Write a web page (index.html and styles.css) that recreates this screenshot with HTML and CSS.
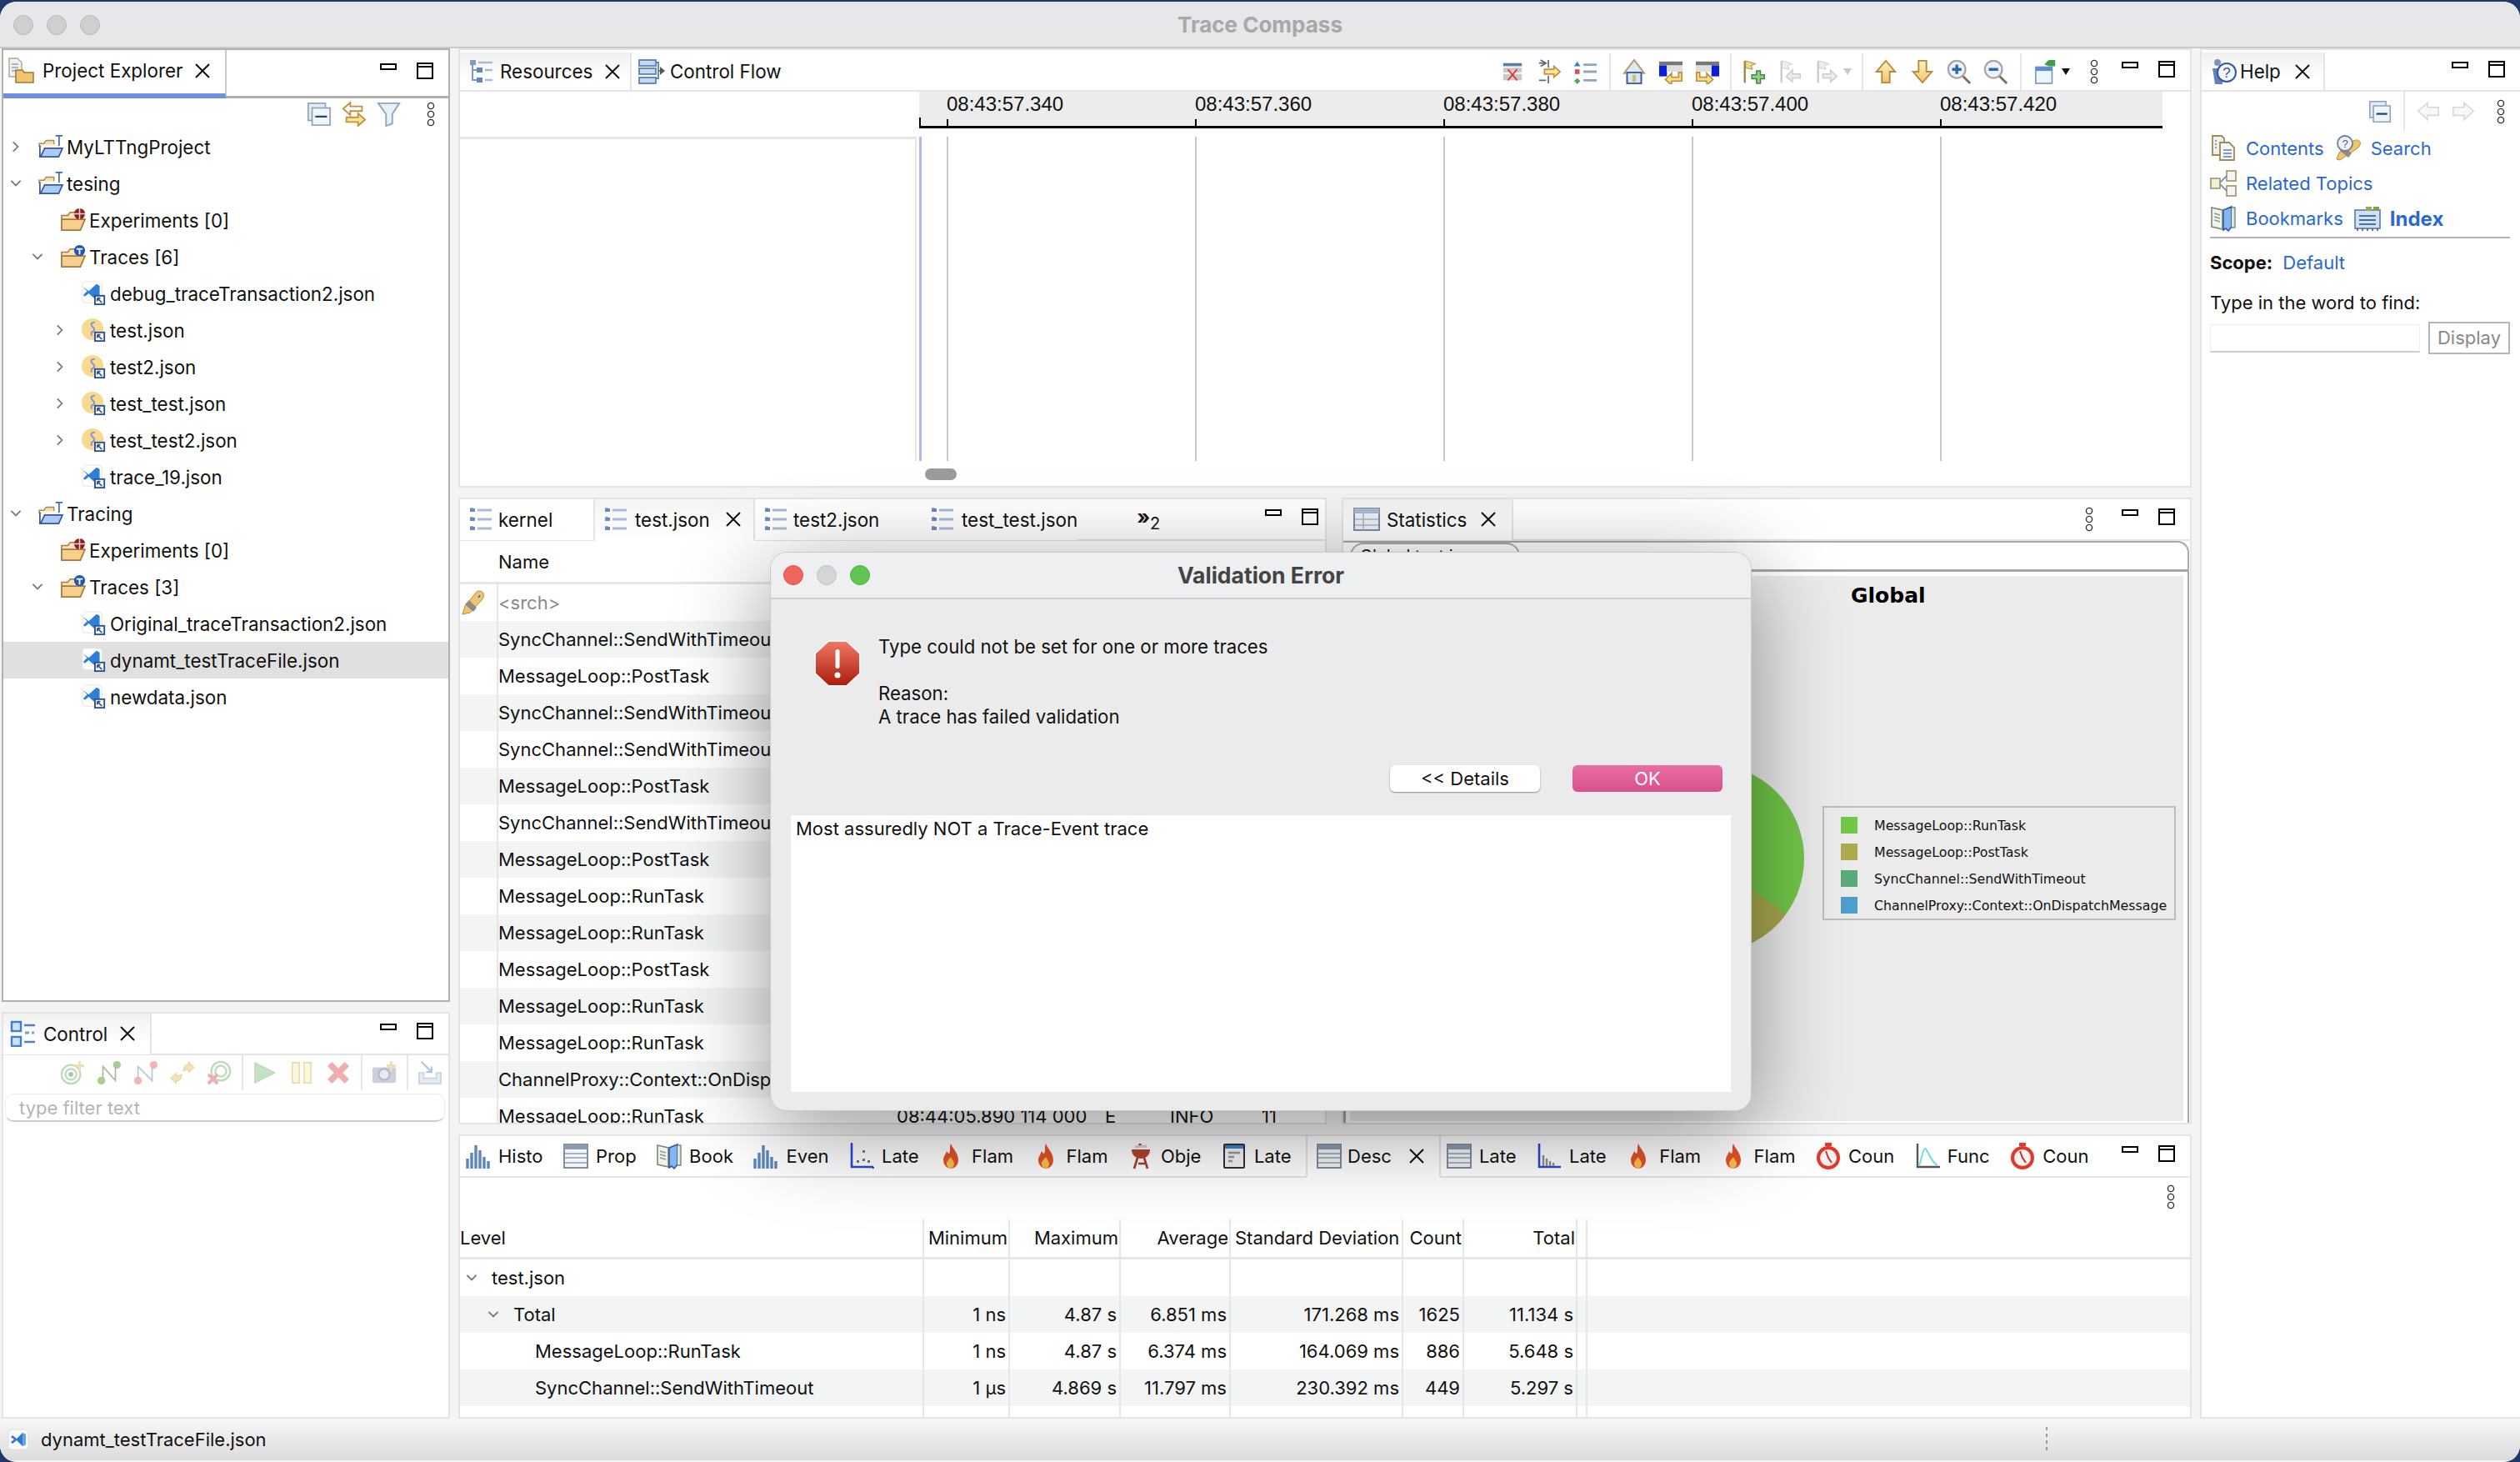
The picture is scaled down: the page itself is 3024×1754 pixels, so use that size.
FILE: index.html
```html
<!DOCTYPE html>
<html>
<head>
    <title>Trace Compass</title>
    <link rel="stylesheet" href="styles.css">
</head>
<body>
<svg class="sprite" xmlns="http://www.w3.org/2000/svg">
    <defs>
        <linearGradient id="g-err" x1="0" y1="0" x2="0" y2="1"><stop offset="0" stop-color="#ee7a62"/><stop offset="1" stop-color="#ab1a0e"/></linearGradient>
        <linearGradient id="g-arrow" x1="0" y1="0" x2="0" y2="1"><stop offset="0" stop-color="#fff3c4"/><stop offset="1" stop-color="#f2c469"/></linearGradient>
        <symbol id="i-min" viewBox="0 0 20 10"><rect x="1" y="1" width="18" height="6" fill="#fff" stroke="#000" stroke-width="2"/></symbol>
        <symbol id="i-max" viewBox="0 0 20 20"><rect x="1" y="1" width="18" height="18" fill="#fff" stroke="#000" stroke-width="2"/><path d="M1 5h18" stroke="#000" stroke-width="2"/></symbol>
        <symbol id="i-x" viewBox="0 0 20 20"><path d="M2 2l16 16M18 2L2 18" stroke="#111" stroke-width="2" fill="none"/></symbol>
        <symbol id="i-dots" viewBox="0 0 10 30"><g fill="none" stroke="#333" stroke-width="1.4"><circle cx="5" cy="5" r="3.6"/><circle cx="5" cy="15" r="3.6"/><circle cx="5" cy="25" r="3.6"/></g></symbol>
        <symbol id="i-right" viewBox="0 0 16 20"><path d="M4 3l7 7-7 7" fill="none" stroke="#777" stroke-width="2.2"/></symbol>
        <symbol id="i-down" viewBox="0 0 20 16"><path d="M3 4l7 7 7-7" fill="none" stroke="#777" stroke-width="2.2"/></symbol>
        <symbol id="i-explorer" viewBox="0 0 32 32"><path d="M1 1h10l5 5v17H1z" fill="#edf1f7" stroke="#b7a67a" stroke-width="1.4"/><path d="M4 8h8M4 12h8M4 16h8" stroke="#87a3d2" stroke-width="1.6"/><path d="M9 15h8l2 3h11v12H9z" fill="#efc66f" stroke="#a37a34" stroke-width="1.6"/></symbol>
        <symbol id="i-project" viewBox="0 0 32 32"><path d="M1 12h6l3-4h10v7H1z" fill="#f3dfb5" stroke="#a58a58" stroke-width="1.4"/><path d="M2 13h20v4H2z" fill="#fff6dd"/><path d="M2 14v15h24l5-11H8l-5 11" fill="#a9ccf5" stroke="#3655ad" stroke-width="1.8"/><path d="M22 2h9M26.500 2v13" stroke="#3e6aae" stroke-width="1.8"/></symbol>
        <symbol id="i-exp" viewBox="0 0 32 32"><path d="M1 10h8l3-4h8v5h5v5H1z" fill="#f8e4b8" stroke="#a6763a" stroke-width="1.6"/><path d="M1 29V15h30l-6 14z" fill="#f4d08c" stroke="#a6763a" stroke-width="1.8"/><circle cx="24" cy="8" r="7" fill="#8c1d1d"/><path d="M17 8h14M24 1v14" stroke="#f3dada" stroke-width="1.6"/></symbol>
        <symbol id="i-traces" viewBox="0 0 32 32"><path d="M1 10h8l3-4h8v5h5v5H1z" fill="#f8e4b8" stroke="#a6763a" stroke-width="1.6"/><path d="M1 29V15h30l-6 14z" fill="#f4d08c" stroke="#a6763a" stroke-width="1.8"/><circle cx="24" cy="8" r="7" fill="#1f55b8"/><path d="M20 6h8M24 6v7" stroke="#fff" stroke-width="2"/></symbol>
        <symbol id="i-vsfile" viewBox="0 0 32 32"><rect x="1" y="1" width="25" height="27" rx="4" fill="#fff" stroke="#e3e3e3"/><path d="M4 9l5 4 10-9 4 2v17l-4 2-10-9-5 4-2-2 5-5-5-5z" fill="#2f7fd6"/><rect x="16" y="18" width="14" height="13" fill="#2c4f8d"/><rect x="18" y="20" width="10" height="9" fill="#fff"/><path d="M20 22l6 6M20 22h4M20 22v4" stroke="#2c4f8d" stroke-width="1.8"/></symbol>
        <symbol id="i-trace" viewBox="0 0 32 32"><circle cx="14" cy="15" r="14" fill="#f8d98e"/><path d="M17 6c-5 0-6 3-3 6 3 2 3 5 0 6-2 1-2 3-1 5" fill="none" stroke="#7d92dc" stroke-width="2"/><rect x="16" y="18" width="14" height="13" fill="#2c4f8d"/><rect x="18" y="20" width="10" height="9" fill="#fff"/><path d="M20 22l6 6M20 22h4M20 22v4" stroke="#2c4f8d" stroke-width="1.8"/></symbol>
        <symbol id="i-collapse" viewBox="0 0 32 32"><rect x="2" y="2" width="22" height="22" fill="#e4ebf4" stroke="#8ea4bd" stroke-width="1.8"/><rect x="7" y="8" width="23" height="22" fill="#f0f5fa" stroke="#8ea4bd" stroke-width="1.8"/><path d="M11 19h15" stroke="#23466f" stroke-width="2.4"/></symbol>
        <symbol id="i-link" viewBox="0 0 32 32"><path d="M2 9l9-8v5h15v6H11v5z" fill="#fff" stroke="#c1913e" stroke-width="2"/><path d="M30 23l-9-8v5H6v6h15v5z" fill="#fbe29a" stroke="#c1913e" stroke-width="2"/></symbol>
        <symbol id="i-filter" viewBox="0 0 32 32"><path d="M2 2h27L20 16v12l-8 3V16z" fill="#e9f0f8" stroke="#8ea6c4" stroke-width="2"/></symbol>
        <symbol id="i-control" viewBox="0 0 32 32"><g fill="#cfe0f5" stroke="#3f7fd0" stroke-width="2.400"><rect x="2" y="2" width="11" height="11"/><rect x="2" y="20" width="11" height="11"/></g><path d="M17 6h13M17 26h13" stroke="#5a7fae" stroke-width="2.400"/><path d="M18 15h5M26 15h3" stroke="#7d9bc0" stroke-width="3"/></symbol>
        <symbol id="i-tree" viewBox="0 0 32 32"><path d="M5 4v23M5 14h6M5 26h6" stroke="#7e9bc5" stroke-width="2"/><rect x="2" y="2" width="7" height="6" fill="#7e9bc5"/><rect x="10" y="11" width="7" height="6" fill="#5f86bd"/><rect x="10" y="23" width="7" height="6" fill="#5f86bd"/><path d="M12 5h17M20 14h9M20 26h9" stroke="#a9bad3" stroke-width="2.4"/></symbol>
        <symbol id="i-flow" viewBox="0 0 32 32"><g fill="#c6d9ef" stroke="#5b82b8" stroke-width="1.8"><rect x="1" y="2" width="20" height="7"/><rect x="1" y="12" width="20" height="7"/><rect x="1" y="23" width="20" height="7"/></g><path d="M21 5h3v19h-3M24 15h3" fill="none" stroke="#5b82b8" stroke-width="1.8"/><path d="M26 10l6 5-6 5z" fill="#555"/></symbol>
        <symbol id="i-list" viewBox="0 0 32 32"><path d="M4 2v28" stroke="#8aa3c7" stroke-width="3" stroke-dasharray="5 6"/><path d="M2 5h6M2 16h6M2 27h6" stroke="#6d8cbc" stroke-width="4"/><path d="M11 5h17M11 16h17M11 27h17" stroke="#a8bad4" stroke-width="3"/></symbol>
        <symbol id="i-table" viewBox="0 0 32 32"><rect x="2" y="2" width="28" height="28" fill="#f3f5f8" stroke="#7f8ea3" stroke-width="2"/><rect x="2" y="2" width="28" height="6" fill="#8d9cb2"/><path d="M3 13h26M3 18h26M3 24h26" stroke="#a9b4c4" stroke-width="2"/></symbol>
        <symbol id="i-help" viewBox="0 0 32 32"><circle cx="9" cy="5" r="4" fill="#7b95b9"/><path d="M3 12h12v19H6z" fill="#5f83b3"/><circle cx="20" cy="17" r="11" fill="#f2f5fa" stroke="#34589b" stroke-width="2"/><text x="20" y="23" font-size="17" font-family="Liberation Sans" text-anchor="middle" fill="#34589b">?</text></symbol>
        <symbol id="i-stats" viewBox="0 0 32 32"><rect x="1" y="3" width="30" height="26" fill="#eef2f8" stroke="#7f8ea3" stroke-width="2"/><rect x="1" y="3" width="30" height="6" fill="#a9bad3"/><path d="M12 9v20M2 16h28M2 23h28" stroke="#a9b4c4" stroke-width="1.6"/></symbol>
        <symbol id="i-bars" viewBox="0 0 32 32"><path d="M3 31V19M8 31V12M13 31V3M18 31V9M23 31V17M28 31V22" stroke="#5c86c2" stroke-width="3.400"/></symbol>
        <symbol id="i-book" viewBox="0 0 32 32"><path d="M2 3l13 3v23L2 26z" fill="#f0f3e7" stroke="#7d8872" stroke-width="1.6"/><path d="M5 10l7 2M5 14l7 2M5 18l7 2" stroke="#8a97a5" stroke-width="1.400"/><path d="M16 6l10-4v24l-4 5-3-3-3 2z" fill="#86b6ec" stroke="#2d5a9d" stroke-width="1.6"/><path d="M26 3h4v24h-4" fill="#dce6d9" stroke="#7d8872" stroke-width="1.4"/></symbol>
        <symbol id="i-scatter" viewBox="0 0 32 32"><path d="M4 1v28h26" fill="none" stroke="#2c49d6" stroke-width="2.600"/><path d="M3 1l1-1 1 1M29 29l2 1-2 1" stroke="#2c49d6"/><g fill="#777"><rect x="10" y="21" width="3" height="3"/><rect x="17" y="9" width="3" height="3"/><rect x="17" y="19" width="3" height="3"/><rect x="23" y="21" width="3" height="3"/></g></symbol>
        <symbol id="i-flame" viewBox="0 0 32 32"><path d="M15 1c2 6 9 11 9 20a9 10 0 0 1-18 0c0-5 3-7 4-11 1 2 2 3 3 3 2-4 0-8 2-12z" fill="#e5532a"/><path d="M15 17c1 3 4 5 4 8a4 5 0 0 1-9 0c0-3 3-5 5-8z" fill="#fbc34a"/></symbol>
        <symbol id="i-bbq" viewBox="0 0 32 32"><path d="M15 1v4" stroke="#a53f2a" stroke-width="3"/><path d="M5 8h22c0 7-5 11-11 11S5 15 5 8z" fill="#b4452e"/><path d="M9 5l14-1" stroke="#d8cfc8" stroke-width="3"/><path d="M12 18L8 31M20 18l4 13M13 25h8" stroke="#a53f2a" stroke-width="2.600"/></symbol>
        <symbol id="i-doc" viewBox="0 0 32 32"><rect x="4" y="2" width="24" height="28" rx="1" fill="#f6f6f6" stroke="#333" stroke-width="2"/><rect x="5" y="3" width="22" height="4" fill="#3d86d8"/><path d="M9 12h14M9 17h7M9 22h5" stroke="#9a9a9a" stroke-width="2.400"/></symbol>
        <symbol id="i-latebars" viewBox="0 0 32 32"><path d="M4 1v28h26" fill="none" stroke="#2c49d6" stroke-width="2.600"/><path d="M9 28V15M13 28V19M17 28V22M21 28V24" stroke="#8d8d8d" stroke-width="2.400"/></symbol>
        <symbol id="i-watch" viewBox="0 0 32 32"><rect x="12" y="0" width="8" height="4" fill="#e5362a"/><circle cx="16" cy="18" r="14" fill="#e5362a"/><circle cx="16" cy="18" r="10" fill="#f4f4f4"/><path d="M16 18l-3-8 3 8 4 6" stroke="#d92c20" stroke-width="2" fill="none"/></symbol>
        <symbol id="i-func" viewBox="0 0 32 32"><path d="M4 1v28h27" fill="none" stroke="#555" stroke-width="2.400"/><path d="M6 27c3-6 4-20 7-20 3 0 6 15 15 20" fill="none" stroke="#6fdcea" stroke-width="2"/></symbol>
        <symbol id="i-rowsx" viewBox="0 0 32 32"><rect x="4" y="5" width="24" height="4" fill="#5d7ea8"/><rect x="4" y="11" width="24" height="6" fill="#c9c9c9"/><rect x="4" y="19" width="24" height="8" fill="#c9c9c9"/><path d="M10 13l12 14M22 13L10 27" stroke="#df3b34" stroke-width="2"/></symbol>
        <symbol id="i-merge" viewBox="0 0 32 32"><path d="M3 5h9M3 27h9M15 1v10M15 21v10M5 1l7 4-7 4" fill="none" stroke="#5c6a7c" stroke-width="1.800"/><path d="M10 13h12v-4l8 7-8 7v-4H10z" fill="#fbe29a" stroke="#c1913e" stroke-width="1.800"/></symbol>
        <symbol id="i-legend" viewBox="0 0 32 32"><path d="M5 3l4 6H1z" fill="#3c7cc8"/><rect x="2" y="13" width="6" height="6" fill="#d84f4f"/><path d="M5 24l4 4-4 4-4-4z" fill="#58a862"/><path d="M13 7h17M13 16h17M13 27h17" stroke="#8ea6c4" stroke-width="3"/></symbol>
        <symbol id="i-home" viewBox="0 0 32 32"><path d="M16 1L3 18h4v13h18V18h4z" fill="#dfe9f5" stroke="#b59a6c" stroke-width="2"/><rect x="7" y="17" width="18" height="14" fill="#d6e6f7" stroke="#3b5e9e" stroke-width="2"/><rect x="14" y="20" width="4" height="9" fill="#c7c552"/></symbol>
        <symbol id="i-prev" viewBox="0 0 32 32"><rect x="1" y="3" width="30" height="5" fill="#777"/><rect x="1" y="8" width="10" height="14" fill="#0b1fd8"/><rect x="11" y="8" width="20" height="8" fill="#dedede"/><path d="M26 17v6h-9v-5l-8 8 8 7v-5h13V17z" fill="#fbdd8c" stroke="#c1913e" stroke-width="1.800"/></symbol>
        <symbol id="i-next" viewBox="0 0 32 32"><rect x="1" y="3" width="30" height="5" fill="#777"/><rect x="21" y="8" width="10" height="14" fill="#0b1fd8"/><rect x="1" y="8" width="20" height="8" fill="#dedede"/><path d="M6 17v6h9v-5l8 8-8 7v-5H2V17z" fill="#fbdd8c" stroke="#c1913e" stroke-width="1.800"/></symbol>
        <symbol id="i-flagadd" viewBox="0 0 32 32"><path d="M4 2v28" stroke="#a1884e" stroke-width="2.600"/><path d="M5 2l13 4-6 2 2 5-9-2z" fill="#f1dc75" stroke="#a1884e"/><path d="M19 15h5v5h5v5h-5v6h-5v-6h-6v-5h6z" fill="#96cf80" stroke="#3c8a44" stroke-width="1.600"/></symbol>
        <symbol id="i-flagprev" viewBox="0 0 32 32"><path d="M4 2v28" stroke="#ccc" stroke-width="2.600"/><path d="M5 2l13 4-6 2 2 5-9-2z" fill="#eee" stroke="#ccc"/><path d="M28 19H18v-5l-8 8 8 7v-5h10z" fill="#eee" stroke="#ccc" stroke-width="1.600"/></symbol>
        <symbol id="i-flagnext" viewBox="0 0 32 32"><path d="M4 2v28" stroke="#ccc" stroke-width="2.600"/><path d="M5 2l13 4-6 2 2 5-9-2z" fill="#eee" stroke="#ccc"/><path d="M10 19h10v-5l8 8-8 7v-5H10z" fill="#eee" stroke="#ccc" stroke-width="1.600"/></symbol>
        <symbol id="i-up" viewBox="0 0 32 32"><path d="M16 2L4 16h7v14h10V16h7z" fill="url(#g-arrow)" stroke="#b98a3a" stroke-width="2"/></symbol>
        <symbol id="i-dn" viewBox="0 0 32 32"><path d="M16 30L4 16h7V2h10v14h7z" fill="url(#g-arrow)" stroke="#b98a3a" stroke-width="2"/></symbol>
        <symbol id="i-zoomin" viewBox="0 0 32 32"><path d="M19 20l11 11" stroke="#8a6b52" stroke-width="3"/><circle cx="13" cy="13" r="11" fill="#eef3fa" stroke="#a7a7a7" stroke-width="2.400"/><path d="M13 7v12M7 13h12" stroke="#2866bc" stroke-width="3.600"/></symbol>
        <symbol id="i-zoomout" viewBox="0 0 32 32"><path d="M19 20l11 11" stroke="#8a6b52" stroke-width="3"/><circle cx="13" cy="13" r="11" fill="#eef3fa" stroke="#a7a7a7" stroke-width="2.400"/><path d="M7 13h12" stroke="#2866bc" stroke-width="3.600"/></symbol>
        <symbol id="i-newview" viewBox="0 0 32 32"><rect x="3" y="10" width="21" height="21" fill="#edf4fb" stroke="#7c9ac4" stroke-width="1.800"/><rect x="3" y="10" width="21" height="5" fill="#5c8fd0"/><path d="M14 7c4-4 4-6 8-6h6v8h-6c-3 0-4-1-8-2z" fill="#3f9d4b"/></symbol>
        <symbol id="i-srch" viewBox="0 0 32 32"><path d="M12 28l-9 2 3-10L20 3c3-2 7-1 8 2s0 6-2 8z" fill="#efc66f" stroke="#b98a3a"/><path d="M6 18l10 9 4-5-9-9z" fill="#8f8a84"/><path d="M24 7l-2 3" stroke="#3e7dc8" stroke-width="2"/></symbol>
        <symbol id="i-search-help" viewBox="0 0 32 32"><path d="M6 30l-4-1 3-8L22 7c3-2 7-1 8 1s0 5-2 7z" fill="#efc66f" stroke="#b98a3a"/><path d="M6 19l10 8 4-5-9-8z" fill="#8f8a84"/><circle cx="12" cy="10" r="9" fill="#eef2f8" stroke="#6f7e94" stroke-width="1.800"/><text x="12" y="15" font-size="13" font-family="Liberation Sans" text-anchor="middle" fill="#3e5d8f">?</text></symbol>
        <symbol id="i-contents" viewBox="0 0 32 32"><path d="M3 1h11l3 3v20H3z" fill="#f2f0e6" stroke="#9b8b58" stroke-width="1.800"/><path d="M6 7h2M6 11h2M6 15h2" stroke="#7d9bd0" stroke-width="1.800"/><path d="M12 9h11l6 6v15H12z" fill="#f4f6fa" stroke="#9b8b58" stroke-width="1.800"/><path d="M16 18h10M16 22h10M16 26h10" stroke="#7d9bd0" stroke-width="1.800"/></symbol>
        <symbol id="i-related" viewBox="0 0 32 32"><rect x="1" y="10" width="11" height="12" fill="#f2eeda" stroke="#a3925e" stroke-width="1.600"/><rect x="20" y="1" width="11" height="12" fill="#f2f4f8" stroke="#a3925e" stroke-width="1.600"/><rect x="20" y="19" width="11" height="12" fill="#f2f4f8" stroke="#a3925e" stroke-width="1.600"/><path d="M12 15l8-8M12 17l8 8" stroke="#7f93b2" stroke-width="1.800"/></symbol>
        <symbol id="i-index" viewBox="0 0 32 32"><rect x="1" y="6" width="30" height="22" fill="#cfe0f3" stroke="#6488b8" stroke-width="1.800"/><rect x="14" y="2" width="7" height="5" fill="#9aa84e"/><rect x="23" y="2" width="7" height="5" fill="#7ea04d"/><path d="M6 13h20M6 18h20M6 23h20" stroke="#4a6f9f" stroke-width="1.800"/><path d="M4 28v3M10 28v3M16 28v3M22 28v3M28 28v3" stroke="#555" stroke-width="1.600"/></symbol>
        <symbol id="i-backg" viewBox="0 0 32 32"><path d="M2 15L15 4v6h15v11H15v6z" fill="#f8f8f8" stroke="#d8d8d8" stroke-width="1.800"/></symbol>
        <symbol id="i-fwdg" viewBox="0 0 32 32"><path d="M30 15L17 4v6H2v11h15v6z" fill="#f8f8f8" stroke="#d8d8d8" stroke-width="1.800"/></symbol>
        <symbol id="i-target" viewBox="0 0 32 32"><g fill="none" stroke="#a9d3ad" stroke-width="2.400"><circle cx="14" cy="18" r="12"/><circle cx="14" cy="18" r="7"/></g><circle cx="14" cy="18" r="3" fill="#9bb79e"/><path d="M25 1v13M19 7h12" stroke="#ecd9a2" stroke-width="3.400"/></symbol>
        <symbol id="i-conn" viewBox="0 0 32 32"><circle cx="6" cy="26" r="5" fill="#8fc57a"/><circle cx="26" cy="6" r="5" fill="#8fc57a"/><path d="M8 22V8l16 18V8" fill="none" stroke="#9ca38f" stroke-width="1.800"/></symbol>
        <symbol id="i-disc" viewBox="0 0 32 32"><circle cx="6" cy="26" r="5" fill="#eea3a3"/><circle cx="26" cy="6" r="5" fill="#eea3a3"/><path d="M6 22V8l18 18V10" fill="none" stroke="#a9b6d6" stroke-width="1.800"/></symbol>
        <symbol id="i-sync" viewBox="0 0 32 32"><path d="M17 14c0-6 3-9 7-8V2l7 7-7 7v-4c-3 0-5 1-7 2z" fill="#f3dca6" stroke="#dcc07e"/><path d="M15 18c0 6-3 9-7 8v4l-7-7 7-7v4c3 0 5-1 7-2z" fill="#f3dca6" stroke="#dcc07e"/></symbol>
        <symbol id="i-tgtx" viewBox="0 0 32 32"><g fill="none" stroke="#a9d3ad" stroke-width="2.400"><circle cx="18" cy="14" r="12"/><circle cx="18" cy="14" r="7"/></g><path d="M2 18l12 12M14 18L2 30" stroke="#ee9a9a" stroke-width="4"/></symbol>
        <symbol id="i-play" viewBox="0 0 32 32"><path d="M3 3l26 13L3 29z" fill="#b6dcb4" stroke="#9fc7a0"/></symbol>
        <symbol id="i-pause" viewBox="0 0 32 32"><rect x="4" y="3" width="9" height="26" fill="#fcf4d8" stroke="#e6d596" stroke-width="1.800"/><rect x="19" y="3" width="9" height="26" fill="#fcf4d8" stroke="#e6d596" stroke-width="1.800"/></symbol>
        <symbol id="i-stop" viewBox="0 0 32 32"><path d="M5 5l22 22M27 5L5 27" stroke="#ee9999" stroke-width="8"/></symbol>
        <symbol id="i-camera" viewBox="0 0 32 32"><rect x="1" y="9" width="30" height="20" rx="2" fill="#bfc3d6"/><circle cx="16" cy="18" r="7" fill="#e2e4ee" stroke="#9ca1b8" stroke-width="2"/><path d="M25 1v13M19 7h12" stroke="#ecd9a2" stroke-width="3.400"/></symbol>
        <symbol id="i-import" viewBox="0 0 32 32"><path d="M2 16v14h28V16h-6v7H8v-7z" fill="#dfe7f1" stroke="#bccbdc" stroke-width="1.800"/><path d="M5 2l13 13M18 8v7h-7" fill="none" stroke="#9dbadb" stroke-width="2.400"/></symbol>
        <symbol id="i-error" viewBox="0 0 56 56"><path d="M17 1h22l16 15v24L39 55H17L1 40V16z" fill="url(#g-err)" stroke="#f4f4f4" stroke-width="2"/><rect x="25.500" y="11" width="5" height="23" rx="2.500" fill="#fff"/><circle cx="28" cy="42" r="3.500" fill="#fff"/></symbol>
        <symbol id="i-vscode" viewBox="0 0 26 26"><rect x="1" y="1" width="24" height="24" rx="4" fill="#fafafa" stroke="#dedede"/><path d="M4 10l4 3-4 3 2 2 5-4 7 7 4-2V7l-4-2-7 7-5-4z" fill="#2f78cd"/><path d="M18 5l4 2v12l-4 2z" fill="#60a7ea"/></symbol>
    </defs>
</svg>

<div class="window">
    <div class="titlebar">
        <div class="lights"><i></i><i></i><i></i></div>
        <span class="app-title">Trace Compass</span>
    </div>

    <div class="workbench">
        <!-- left column -->
        <div class="col-left">
            <section class="panel panel-active explorer">
                <div class="tabbar tabbar-active">
                    <div class="tab tab-explorer"><svg class="ic"><use href="#i-explorer"/></svg><span>Project Explorer</span><svg class="close"><use href="#i-x"/></svg></div>
                    <div class="tab-spacer"></div>
                    <svg class="min"><use href="#i-min"/></svg><svg class="max"><use href="#i-max"/></svg>
                </div>
                <div class="viewbar">
                    <svg class="ic"><use href="#i-collapse"/></svg><svg class="ic"><use href="#i-link"/></svg><svg class="ic"><use href="#i-filter"/></svg><svg class="dots"><use href="#i-dots"/></svg>
                </div>
                <ul class="tree">
                    <li class="d0"><svg class="chev"><use href="#i-right"/></svg><svg class="ic"><use href="#i-project"/></svg>MyLTTngProject</li>
                    <li class="d0"><svg class="chev"><use href="#i-down"/></svg><svg class="ic"><use href="#i-project"/></svg>tesing</li>
                    <li class="d1"><span class="chev"></span><svg class="ic"><use href="#i-exp"/></svg>Experiments [0]</li>
                    <li class="d1"><svg class="chev"><use href="#i-down"/></svg><svg class="ic"><use href="#i-traces"/></svg>Traces [6]</li>
                    <li class="d2"><span class="chev"></span><svg class="ic"><use href="#i-vsfile"/></svg>debug_traceTransaction2.json</li>
                    <li class="d2"><svg class="chev"><use href="#i-right"/></svg><svg class="ic"><use href="#i-trace"/></svg>test.json</li>
                    <li class="d2"><svg class="chev"><use href="#i-right"/></svg><svg class="ic"><use href="#i-trace"/></svg>test2.json</li>
                    <li class="d2"><svg class="chev"><use href="#i-right"/></svg><svg class="ic"><use href="#i-trace"/></svg>test_test.json</li>
                    <li class="d2"><svg class="chev"><use href="#i-right"/></svg><svg class="ic"><use href="#i-trace"/></svg>test_test2.json</li>
                    <li class="d2"><span class="chev"></span><svg class="ic"><use href="#i-vsfile"/></svg>trace_19.json</li>
                    <li class="d0"><svg class="chev"><use href="#i-down"/></svg><svg class="ic"><use href="#i-project"/></svg>Tracing</li>
                    <li class="d1"><span class="chev"></span><svg class="ic"><use href="#i-exp"/></svg>Experiments [0]</li>
                    <li class="d1"><svg class="chev"><use href="#i-down"/></svg><svg class="ic"><use href="#i-traces"/></svg>Traces [3]</li>
                    <li class="d2"><span class="chev"></span><svg class="ic"><use href="#i-vsfile"/></svg>Original_traceTransaction2.json</li>
                    <li class="d2 selected"><span class="chev"></span><svg class="ic"><use href="#i-vsfile"/></svg>dynamt_testTraceFile.json</li>
                    <li class="d2"><span class="chev"></span><svg class="ic"><use href="#i-vsfile"/></svg>newdata.json</li>
                </ul>
            </section>

            <section class="panel control">
                <div class="tabbar">
                    <div class="tab tab-control"><svg class="ic"><use href="#i-control"/></svg><span>Control</span><svg class="close"><use href="#i-x"/></svg></div>
                    <div class="tab-spacer"></div>
                    <svg class="min"><use href="#i-min"/></svg><svg class="max"><use href="#i-max"/></svg>
                </div>
                <div class="ctl-tools">
                    <svg class="ic"><use href="#i-target"/></svg><svg class="ic"><use href="#i-conn"/></svg><svg class="ic"><use href="#i-disc"/></svg><svg class="ic"><use href="#i-sync"/></svg><svg class="ic"><use href="#i-tgtx"/></svg>
                    <b class="sep"></b>
                    <svg class="ic"><use href="#i-play"/></svg><svg class="ic"><use href="#i-pause"/></svg><svg class="ic"><use href="#i-stop"/></svg>
                    <b class="sep"></b>
                    <svg class="ic"><use href="#i-camera"/></svg>
                    <b class="sep"></b>
                    <svg class="ic"><use href="#i-import"/></svg>
                </div>
                <div class="filter-box">type filter text</div>
            </section>
        </div>

        <!-- center column -->
        <div class="col-center">
            <section class="panel timegraph">
                <div class="tabbar tabbar-low">
                    <div class="tab tab-res"><svg class="ic"><use href="#i-tree"/></svg><span>Resources</span><svg class="close"><use href="#i-x"/></svg></div>
                    <div class="tab tab-plain tab-flow"><svg class="ic"><use href="#i-flow"/></svg><span>Control Flow</span></div>
                    <div class="tab-spacer"></div>
                    <div class="tg-tools">
                        <svg class="ic"><use href="#i-rowsx"/></svg><svg class="ic"><use href="#i-merge"/></svg><svg class="ic"><use href="#i-legend"/></svg>
                        <b class="sep"></b>
                        <svg class="ic"><use href="#i-home"/></svg><svg class="ic"><use href="#i-prev"/></svg><svg class="ic"><use href="#i-next"/></svg>
                        <b class="sep"></b>
                        <svg class="ic"><use href="#i-flagadd"/></svg><svg class="ic"><use href="#i-flagprev"/></svg><svg class="ic"><use href="#i-flagnext"/></svg><span class="drop drop-off"></span>
                        <b class="sep"></b>
                        <svg class="ic"><use href="#i-up"/></svg><svg class="ic"><use href="#i-dn"/></svg><svg class="ic"><use href="#i-zoomin"/></svg><svg class="ic"><use href="#i-zoomout"/></svg>
                        <b class="sep"></b>
                        <svg class="ic"><use href="#i-newview"/></svg><span class="drop"></span>
                        <svg class="dots"><use href="#i-dots"/></svg>
                    </div>
                    <svg class="min"><use href="#i-min"/></svg><svg class="max"><use href="#i-max"/></svg>
                </div>
                <div class="tg-body">
                    <div class="tg-names"></div>
                    <div class="tg-right">
                        <div class="ruler">
                            <span>08:43:57.340</span><span>08:43:57.360</span><span>08:43:57.380</span><span>08:43:57.400</span><span>08:43:57.420</span>
                        </div>
                        <div class="graph"></div>
                    </div>
                </div>
                <div class="tg-scroll"><i></i></div>
            </section>

            <div class="mid-row">
                <section class="panel events">
                    <div class="tabbar">
                        <div class="tab tab-plain tab-kernel"><svg class="ic"><use href="#i-list"/></svg><span>kernel</span></div>
                        <div class="tab tab-testjson"><svg class="ic"><use href="#i-list"/></svg><span>test.json</span><svg class="close"><use href="#i-x"/></svg></div>
                        <div class="tab tab-plain tab-test2"><svg class="ic"><use href="#i-list"/></svg><span>test2.json</span></div>
                        <div class="tab tab-plain tab-testtest"><svg class="ic"><use href="#i-list"/></svg><span>test_test.json</span></div>
                        <span class="overflow">»<sub>2</sub></span>
                        <div class="tab-spacer"></div>
                        <svg class="min"><use href="#i-min"/></svg><svg class="max"><use href="#i-max"/></svg>
                    </div>
                    <div class="ev-head"><span></span><span>Name</span></div>
                    <div class="ev-rows">
                        <div class="ev-row"><svg class="ic"><use href="#i-srch"/></svg><span class="srch">&lt;srch&gt;</span></div>
                        <div class="ev-row"><span></span><span>SyncChannel::SendWithTimeout</span></div>
                        <div class="ev-row"><span></span><span>MessageLoop::PostTask</span></div>
                        <div class="ev-row"><span></span><span>SyncChannel::SendWithTimeout</span></div>
                        <div class="ev-row"><span></span><span>SyncChannel::SendWithTimeout</span></div>
                        <div class="ev-row"><span></span><span>MessageLoop::PostTask</span></div>
                        <div class="ev-row"><span></span><span>SyncChannel::SendWithTimeout</span></div>
                        <div class="ev-row"><span></span><span>MessageLoop::PostTask</span></div>
                        <div class="ev-row"><span></span><span>MessageLoop::RunTask</span></div>
                        <div class="ev-row"><span></span><span>MessageLoop::RunTask</span></div>
                        <div class="ev-row"><span></span><span>MessageLoop::PostTask</span></div>
                        <div class="ev-row"><span></span><span>MessageLoop::RunTask</span></div>
                        <div class="ev-row"><span></span><span>MessageLoop::RunTask</span></div>
                        <div class="ev-row"><span></span><span>ChannelProxy::Context::OnDispatchMessage</span></div>
                        <div class="ev-row"><span></span><span>MessageLoop::RunTask</span><span>08:44:05.890 114 000</span><span>E</span><span>INFO</span><span>11</span></div>
                    </div>
                </section>

                <section class="panel statistics">
                    <div class="tabbar">
                        <div class="tab tab-stats"><svg class="ic"><use href="#i-stats"/></svg><span>Statistics</span><svg class="close"><use href="#i-x"/></svg></div>
                        <div class="tab-spacer"></div>
                        <svg class="dots"><use href="#i-dots"/></svg>
                        <svg class="min"><use href="#i-min"/></svg><svg class="max"><use href="#i-max"/></svg>
                    </div>
                    <div class="folder">
                        <div class="folder-tab">Global test.json</div>
                        <div class="chart">
                            <span class="chart-title">Global</span>
                            <svg class="pie" viewBox="0 0 240 240">
                                <circle cx="120" cy="120" r="113" fill="#72c749"/>
                                <path d="M120 120L211 187A113 113 0 0 1 120 233A113 113 0 0 1 60 216z" fill="#a9a84e"/>
                            </svg>
                            <div class="legend">
                                <div><i class="c1"></i>MessageLoop::RunTask</div>
                                <div><i class="c2"></i>MessageLoop::PostTask</div>
                                <div><i class="c3"></i>SyncChannel::SendWithTimeout</div>
                                <div><i class="c4"></i>ChannelProxy::Context::OnDispatchMessage</div>
                            </div>
                        </div>
                    </div>
                </section>
            </div>

            <section class="panel descriptive">
                <div class="tabbar tabbar-mini">
                    <div class="tab tab-mini"><svg class="ic"><use href="#i-bars"/></svg><span>Histo</span></div>
                    <div class="tab tab-mini"><svg class="ic"><use href="#i-table"/></svg><span>Prop</span></div>
                    <div class="tab tab-mini"><svg class="ic"><use href="#i-book"/></svg><span>Book</span></div>
                    <div class="tab tab-mini"><svg class="ic"><use href="#i-bars"/></svg><span>Even</span></div>
                    <div class="tab tab-mini"><svg class="ic"><use href="#i-scatter"/></svg><span>Late</span></div>
                    <div class="tab tab-mini"><svg class="ic"><use href="#i-flame"/></svg><span>Flam</span></div>
                    <div class="tab tab-mini"><svg class="ic"><use href="#i-flame"/></svg><span>Flam</span></div>
                    <div class="tab tab-mini"><svg class="ic"><use href="#i-bbq"/></svg><span>Obje</span></div>
                    <div class="tab tab-mini"><svg class="ic"><use href="#i-doc"/></svg><span>Late</span></div>
                    <div class="tab tab-mini tab-desc"><svg class="ic"><use href="#i-table"/></svg><span>Desc</span><svg class="close"><use href="#i-x"/></svg></div>
                    <div class="tab tab-mini"><svg class="ic"><use href="#i-table"/></svg><span>Late</span></div>
                    <div class="tab tab-mini"><svg class="ic"><use href="#i-latebars"/></svg><span>Late</span></div>
                    <div class="tab tab-mini"><svg class="ic"><use href="#i-flame"/></svg><span>Flam</span></div>
                    <div class="tab tab-mini"><svg class="ic"><use href="#i-flame"/></svg><span>Flam</span></div>
                    <div class="tab tab-mini"><svg class="ic"><use href="#i-watch"/></svg><span>Coun</span></div>
                    <div class="tab tab-mini"><svg class="ic"><use href="#i-func"/></svg><span>Func</span></div>
                    <div class="tab tab-mini"><svg class="ic"><use href="#i-watch"/></svg><span>Coun</span></div>
                    <div class="tab-spacer"></div>
                    <svg class="min"><use href="#i-min"/></svg><svg class="max"><use href="#i-max"/></svg>
                </div>
                <div class="desc-bar"><svg class="dots"><use href="#i-dots"/></svg></div>
                <div class="desc-table">
                    <div class="dt-row dt-head"><span class="txt">Level</span><span>Minimum</span><span>Maximum</span><span>Average</span><span class="txt">Standard Deviation</span><span>Count</span><span>Total</span><span></span></div>
                    <div class="dt-row"><span class="txt lvl0"><svg class="chev"><use href="#i-down"/></svg>test.json</span><span></span><span></span><span></span><span></span><span></span><span></span><span></span></div>
                    <div class="dt-row"><span class="txt lvl1"><svg class="chev"><use href="#i-down"/></svg>Total</span><span>1 ns</span><span>4.87 s</span><span>6.851 ms</span><span>171.268 ms</span><span>1625</span><span>11.134 s</span><span></span></div>
                    <div class="dt-row"><span class="txt lvl2">MessageLoop::RunTask</span><span>1 ns</span><span>4.87 s</span><span>6.374 ms</span><span>164.069 ms</span><span>886</span><span>5.648 s</span><span></span></div>
                    <div class="dt-row"><span class="txt lvl2">SyncChannel::SendWithTimeout</span><span>1 µs</span><span>4.869 s</span><span>11.797 ms</span><span>230.392 ms</span><span>449</span><span>5.297 s</span><span></span></div>
                    <div class="dt-row"><span class="txt lvl2">ChannelProxy::Context::OnDispatchMessage</span><span>1 µs</span><span>121.036 µs</span><span>356.255 ms</span><span>3.031 µs</span><span>236</span><span>180.288 ms</span><span></span></div>
                </div>
            </section>
        </div>

        <!-- right column -->
        <section class="panel help">
            <div class="tabbar tabbar-low">
                <div class="tab tab-help"><svg class="ic"><use href="#i-help"/></svg><span>Help</span><svg class="close"><use href="#i-x"/></svg></div>
                <div class="tab-spacer"></div>
                <svg class="min"><use href="#i-min"/></svg><svg class="max"><use href="#i-max"/></svg>
            </div>
            <div class="help-tools">
                <svg class="ic"><use href="#i-collapse"/></svg><b class="sep"></b><svg class="ic"><use href="#i-backg"/></svg><svg class="ic"><use href="#i-fwdg"/></svg><svg class="dots"><use href="#i-dots"/></svg>
            </div>
            <div class="help-links">
                <div class="help-line"><svg class="ic"><use href="#i-contents"/></svg><a>Contents</a><svg class="ic"><use href="#i-search-help"/></svg><a>Search</a></div>
                <div class="help-line"><svg class="ic"><use href="#i-related"/></svg><a>Related Topics</a></div>
                <div class="help-line"><svg class="ic"><use href="#i-book"/></svg><a>Bookmarks</a><svg class="ic"><use href="#i-index"/></svg><a class="strong">Index</a></div>
            </div>
            <div class="help-form">
                <p class="scope"><b>Scope:</b> <a>Default</a></p>
                <p class="find-label">Type in the word to find:</p>
                <div class="find-row"><div class="find-input"></div><div class="find-btn">Display</div></div>
            </div>
        </section>
    </div>

    <div class="statusbar">
        <svg class="vs"><use href="#i-vscode"/></svg>
        <span>dynamt_testTraceFile.json</span>
        <div class="status-grip"></div>
    </div>

    <!-- modal error dialog -->
    <div class="dialog">
        <div class="dlg-title">
            <div class="lights lights-on"><i></i><i></i><i></i></div>
            <span>Validation Error</span>
        </div>
        <div class="dlg-body">
            <svg class="err"><use href="#i-error"/></svg>
            <div class="dlg-msg">
                <p class="line1">Type could not be set for one or more traces</p>
                <p class="line2">Reason:</p>
                <p>A trace has failed validation</p>
            </div>
        </div>
        <div class="dlg-buttons">
            <div class="btn">&lt;&lt; Details</div>
            <div class="btn btn-ok">OK</div>
        </div>
        <div class="dlg-details">Most assuredly NOT a Trace-Event trace</div>
    </div>
</div>
</body>
</html>
```

FILE: styles.css
```css
* {
    box-sizing: border-box;
}

html, body {
    margin: 0;
    height: 1754px;
    overflow: hidden;
}

body {
    background: #1f3a68;
    font-family: Inter, "Liberation Sans", sans-serif;
    font-size: 22px;
    color: #111;
}

.sprite {
    display: block;
    width: 0;
    height: 0;
}

p {
    margin: 0;
}

.window {
    position: relative;
    height: 1752px;
    margin-top: 2px;
    background: #f4f4f4;
    border-radius: 20px;
    overflow: hidden;
}

/* title bar */
.titlebar {
    position: relative;
    height: 56px;
    background: #e6e7e9;
    border-bottom: 2px solid #c9c9c9;
    display: flex;
    align-items: center;
    justify-content: center;
}

.app-title {
    font-weight: 700;
    font-size: 26px;
    color: #a8a8a8;
}

.lights {
    position: absolute;
    left: 16px;
    top: 16px;
    display: flex;
    gap: 16px;
}

.lights i {
    width: 24px;
    height: 24px;
    border-radius: 50%;
    background: #cfcfcf;
    border: 1px solid #b8b8b8;
}

.lights-on {
    left: 15px;
    top: 15px;
}

.lights-on i:nth-child(1) {
    background: #f0665c;
    border-color: #d9544b;
}

.lights-on i:nth-child(2) {
    background: #d4d5d7;
    border-color: #c0c0c0;
}

.lights-on i:nth-child(3) {
    background: #61c554;
    border-color: #4fae44;
}

/* workbench layout */
.workbench {
    height: 1644px;
    padding: 0 0 0 2px;
    display: flex;
    gap: 10px;
}

.col-left {
    width: 538px;
    display: flex;
    flex-direction: column;
    gap: 12px;
}

.col-center {
    width: 2080px;
    display: flex;
    flex-direction: column;
    gap: 12px;
}

.panel {
    background: #fff;
    border: 2px solid #e4e4e4;
    display: flex;
    flex-direction: column;
    overflow: hidden;
}

.panel-active {
    border-color: #b0b0b0;
}

.ic {
    width: 32px;
    height: 32px;
    flex: none;
}

.close {
    width: 20px;
    height: 20px;
    flex: none;
}

.min {
    width: 20px;
    height: 10px;
    flex: none;
    margin: 0 24px 14px 0;
}

.max {
    width: 20px;
    height: 20px;
    flex: none;
    margin: 0 18px 6px 0;
}

.dots {
    width: 10px;
    height: 30px;
    flex: none;
}

.chev {
    width: 16px;
    height: 16px;
    flex: none;
}

.sep {
    width: 2px;
    align-self: stretch;
    background: #e6e6e6;
    flex: none;
}

/* tabs */
.tabbar {
    height: 50px;
    flex: none;
    display: flex;
    align-items: center;
    font-size: 22.4px;
    border-bottom: 2px solid #e4e4e4;
}

.tabbar-active {
    height: 58px;
    border-bottom: 3px solid #b0b0b0;
}

.tabbar-low {
    padding-top: 3px;
}

.tabbar-low .tab {
    height: 45px;
}

.tabbar-mini {
    font-size: 22px;
}

.tab-spacer {
    flex: 1;
}

.tab {
    height: 50px;
    display: flex;
    align-items: center;
    flex: none;
    white-space: nowrap;
    background: linear-gradient(#f0f0f0, #fff 70%);
    border-right: 2px solid #e4e4e4;
}

.tab-plain {
    background: #fff;
    border-right: 0;
}

.tab-explorer {
    height: 58px;
    width: 268px;
    padding: 0 0 3px 6px;
    background: #fff;
    border-bottom: 6px solid #6f90de;
    margin-bottom: -3px;
    border-right: 2px solid #c9c9c9;
}

.tab-explorer span {
    margin: 0 14px 0 9px;
}

.tab-control {
    width: 178px;
    padding-left: 8px;
}

.tab-control span {
    margin: 0 14px 0 8px;
}

.tab-res {
    width: 206px;
    padding-left: 10px;
}

.tab-res span {
    margin: 0 14px 0 6px;
}

.tab-flow {
    padding-left: 8px;
}

.tab-flow span {
    margin-left: 6px;
}

.tab-kernel {
    width: 162px;
    padding-left: 10px;
    border-right: 2px solid #e4e4e4;
}

.tab-kernel span {
    margin-left: 4px;
}

.tab-testjson {
    width: 192px;
    padding-left: 10px;
    background: linear-gradient(#f4f4f4, #fff);
    border-bottom: 2px solid #fff;
    margin-bottom: -2px;
}

.tab-testjson span {
    margin: 0 18px 0 6px;
}

.tab-test2 {
    width: 210px;
    padding-left: 10px;
}

.tab-test2 span {
    margin-left: 4px;
}

.tab-testtest {
    padding-left: 0;
}

.tab-testtest span {
    margin-left: 6px;
}

.overflow {
    margin-left: 71px;
    font-size: 24px;
    font-weight: 700;
}

.overflow sub {
    font-size: 20px;
    font-weight: 400;
}

.events .max {
    margin-right: 8px;
}

.tab-stats {
    width: 204px;
    padding-left: 12px;
}

.tab-stats span {
    margin: 0 16px 0 8px;
}

.tab-help {
    width: 148px;
    padding-left: 10px;
}

.tab-help span {
    margin: 0 16px 0 4px;
}

.tab-mini {
    padding: 0 17.5px 0 6px;
    background: transparent;
    border-right: 0;
    gap: 8px;
}

.tab-desc {
    background: #fff;
    gap: 6px;
    border-left: 2px solid #e4e4e4;
    border-right: 2px solid #e4e4e4;
    border-bottom: 2px solid #fff;
    margin-bottom: -2px;
    padding: 0 17px 0 10px;
}

.tab-desc .close {
    margin-left: 14px;
}

/* project explorer */
.explorer {
    height: 1144px;
}

.viewbar {
    height: 36px;
    flex: none;
    display: flex;
    align-items: center;
    justify-content: flex-end;
    gap: 12px;
    padding: 2px 16px 0 0;
}

.viewbar .ic {
    width: 30px;
    height: 30px;
}

.viewbar .dots {
    margin: 0 0 0 18px;
}

.tree {
    list-style: none;
    margin: 0;
    padding: 0;
    font-size: 22.4px;
}

.tree li {
    height: 44px;
    display: flex;
    align-items: center;
    white-space: nowrap;
}

.tree .chev {
    margin-right: 8px;
}

.tree .ic {
    width: 30px;
    height: 30px;
    margin-right: 4px;
}

.d0 {
    padding-left: 7px;
}

.d0 .chev {
    margin-right: 19px !important;
}

.d1 {
    padding-left: 33px;
}

.d1 .chev {
    margin-right: 20px !important;
}

.d2 {
    padding-left: 60px;
}

.d2 .chev {
    margin-right: 18px !important;
}

.selected {
    background: #e0e0e0;
}

/* control view */
.control {
    flex: 1;
}

.ctl-tools {
    height: 42px;
    flex: none;
    display: flex;
    align-items: center;
    gap: 14px;
    padding-left: 68px;
    overflow: hidden;
}

.ctl-tools .ic {
    width: 30px;
    height: 30px;
    opacity: 0.8;
}

.ctl-tools .sep {
    margin: 0 -2.5px;
}

.filter-box {
    margin: 4px 4px 0 2px;
    height: 34px;
    line-height: 32px;
    padding-left: 16px;
    border: 1px solid #ececec;
    border-bottom: 2px solid #cfcfcf;
    border-radius: 10px;
    color: #b5b5b5;
}

/* time graph */
.timegraph {
    height: 527px;
    flex: none;
}

.tg-tools {
    display: flex;
    align-items: center;
    gap: 14px;
    height: 44px;
    margin-right: 28px;
}

.tg-tools .ic {
    width: 30px;
    height: 30px;
}

.tg-tools .sep {
    margin: 0 -2px;
}

.tg-tools .sep:first-of-type {
    margin: 0 -1px;
}

.tg-tools .sep:last-of-type {
    margin: 0;
}

.drop {
    width: 0;
    height: 0;
    margin-left: -10px;
    border-left: 5px solid transparent;
    border-right: 5px solid transparent;
    border-top: 8px solid #111;
}

.drop-off {
    border-top-color: #c9c9c9;
}

.tg-tools .dots {
    margin-left: 10px;
}

.tg-body {
    flex: 1;
    display: flex;
}

.tg-names {
    width: 548px;
    margin-top: 54px;
    border-top: 3px solid #e6e6e6;
    border-right: 2px solid #e6e6e6;
}

.tg-right {
    width: 1492px;
    margin-left: 3px;
    display: flex;
    flex-direction: column;
}

.ruler {
    height: 44px;
    display: flex;
    padding-left: 33px;
    overflow: hidden;
    background: linear-gradient(#000, #000) 0 100% / 2px 10px no-repeat, #ececec;
    border-bottom: 3px solid #000;
    font-family: "Liberation Sans", sans-serif;
    font-size: 24px;
    color: #111;
}

.ruler span {
    flex: none;
    width: 298px;
    line-height: 30px;
    background: linear-gradient(#000, #000) 0 100% / 2px 8px no-repeat;
}

.graph {
    flex: 1;
    margin-top: 10px;
    border-left: 3px solid #aeb8ea;
    background: repeating-linear-gradient(to right, #c8c8c8 0 2px, transparent 2px 298px) 30px 0 no-repeat;
}

.tg-scroll {
    height: 30px;
    flex: none;
    padding: 9px 0 0 558px;
    background: #fff;
}

.tg-scroll i {
    display: block;
    width: 38px;
    height: 14px;
    border-radius: 7px;
    background: #9b9b9b;
}

/* event table */
.mid-row {
    height: 752px;
    flex: none;
    display: flex;
    gap: 18px;
}

.events {
    width: 1042px;
}

.ev-head {
    height: 52px;
    flex: none;
    display: grid;
    grid-template-columns: 44px 1fr;
    align-items: center;
    border-bottom: 3px solid #e6e6e6;
}

.ev-head span:last-child {
    padding-left: 2px;
}

.ev-rows {
    flex: 1;
    overflow: hidden;
}

.ev-row {
    height: 44px;
    display: grid;
    grid-template-columns: 44px 480px 250px 78px 110px 1fr;
    align-items: center;
    white-space: nowrap;
}

.ev-row:nth-child(even) {
    background: #f3f4f4;
}

.ev-row > :nth-child(2) {
    border-left: 2px solid #e6e6e6;
    line-height: 44px;
}

.srch {
    color: #888;
}

/* statistics */
.statistics {
    flex: 1;
}

.tab-stats + .tab-spacer + .dots {
    margin-right: 34px;
}

.folder {
    flex: 1;
    position: relative;
    border-top: 2px solid #aaa;
    border-right: 2px solid #aaa;
    border-top-right-radius: 14px;
    margin-right: 1px;
    overflow: hidden;
}

.folder-tab {
    height: 32px;
    width: 204px;
    margin-left: 8px;
    padding: 2px 0 0 10px;
    font-size: 20px;
    border: 2px solid #aaa;
    border-bottom: 0;
    border-radius: 16px 16px 0 0;
    overflow: hidden;
}

.chart {
    position: relative;
    height: 670px;
    background: #ebebeb;
    border: 3px solid #a5a5a5;
    border-right: 0;
    box-shadow: inset 0 0 0 5px #fff;
}

.chart-title {
    position: absolute;
    left: 606px;
    top: 14px;
    font-family: "DejaVu Sans", sans-serif;
    font-weight: 700;
    font-size: 25px;
    color: #000;
}

.pie {
    position: absolute;
    left: 317px;
    top: 224px;
    width: 240px;
    height: 240px;
}

.legend {
    position: absolute;
    left: 572px;
    top: 281px;
    width: 424px;
    height: 137px;
    padding: 5px 0 0 20px;
    border: 2px solid #bdbdbd;
    font-family: "DejaVu Sans", sans-serif;
    font-size: 15.8px;
    color: #111;
}

.legend div {
    height: 32px;
    display: flex;
    align-items: center;
    white-space: nowrap;
}

.legend i {
    width: 20px;
    height: 20px;
    margin-right: 20px;
    flex: none;
}

.c1 { background: #72c749; }
.c2 { background: #aeaa4f; }
.c3 { background: #5aaa7a; }
.c4 { background: #4f9fce; }

/* descriptive statistics */
.descriptive {
    flex: 1;
}

.desc-bar {
    height: 50px;
    flex: none;
    display: flex;
    justify-content: flex-end;
    align-items: center;
    padding: 0 18px 4px 0;
}

.desc-table {
    flex: 1;
    overflow: hidden;
}

.dt-row {
    height: 44px;
    display: grid;
    grid-template-columns: 557px 103px 133px 132px 207px 73px 136px 12px 1fr;
    align-items: center;
    white-space: nowrap;
}

.dt-row > span {
    height: 100%;
    line-height: 44px;
    text-align: right;
    padding-right: 3px;
    border-right: 2px solid #e6e6e6;
    overflow: hidden;
}

.dt-row > span:nth-child(8) {
    padding: 0;
}

.dt-row > .txt {
    text-align: left;
    padding-left: 0;
}

.dt-head {
    height: 48px;
    border-bottom: 3px solid #e6e6e6;
}

.dt-head > span {
    padding-right: 1px;
}

.dt-head > span:nth-child(5) {
    padding-left: 5px;
}

.dt-row:nth-child(3),
.dt-row:nth-child(5) {
    background: #f3f4f4;
}

.lvl0 {
    display: flex;
    align-items: center;
    padding-left: 6px !important;
    gap: 16px;
}

.lvl1 {
    display: flex;
    align-items: center;
    padding-left: 32px !important;
    gap: 16px;
}

.lvl2 {
    padding-left: 90px !important;
}

/* help */
.help {
    width: 384px;
    border-right: 0;
}

.help-tools {
    height: 47px;
    flex: none;
    display: flex;
    align-items: center;
    gap: 14px;
    padding-left: 200px;
}

.help-tools .ic {
    width: 28px;
    height: 28px;
}

.help-tools .dots {
    margin-left: 12px;
}

.help-links {
    margin: 0 12px 0 10px;
    padding: 0 0 1px 0;
    border-bottom: 2px solid #b3b3b3;
}

.help-line {
    height: 42px;
    display: flex;
    align-items: center;
    gap: 11px;
}

.help-line a + .ic {
    margin-left: 2px;
}

a {
    color: #2a67d3;
}

.strong {
    font-weight: 700;
    font-size: 24px;
}

.help-form {
    padding: 14px 12px 0 10px;
}

.scope {
    line-height: 30px;
}

.scope a {
    margin-left: 6px;
}

.find-label {
    margin-top: 18px;
    line-height: 30px;
}

.find-row {
    margin-top: 8px;
    display: flex;
    justify-content: space-between;
}

.find-input {
    width: 252px;
    height: 34px;
    margin-top: 3px;
    border: 1px solid #efefef;
    border-bottom: 2px solid #cfcfcf;
}

.find-btn {
    width: 98px;
    height: 39px;
    line-height: 35px;
    text-align: center;
    border: 2px solid #b5b5b5;
    color: #888;
}

/* status bar */
.statusbar {
    height: 50px;
    display: flex;
    align-items: center;
    gap: 14px;
    padding-left: 9px;
    background: linear-gradient(#f7f7f7, #dcdcdc);
    position: relative;
}

.vs {
    width: 26px;
    height: 26px;
    flex: none;
}

.status-grip {
    margin-left: auto;
    margin-right: 567px;
    width: 2px;
    height: 30px;
    background: repeating-linear-gradient(#9a9a9a 0 4px, transparent 4px 8px);
}

/* dialog */
.dialog {
    position: absolute;
    left: 924px;
    top: 660px;
    width: 1178px;
    height: 671px;
    background: #ebebeb;
    border-radius: 20px;
    border: 1px solid #c9c9c9;
    box-shadow: 0 24px 110px rgba(0, 0, 0, 0.42);
    overflow: hidden;
}

.dlg-title {
    position: relative;
    height: 56px;
    background: #eeeff1;
    border-bottom: 2px solid #cfcfcf;
    display: flex;
    align-items: center;
    justify-content: center;
    font-weight: 700;
    font-size: 26.5px;
    color: #444;
}

.dlg-body {
    display: flex;
    padding: 49px 0 0 52px;
}

.err {
    width: 56px;
    height: 56px;
    flex: none;
}

.dlg-msg {
    margin-left: 21px;
    margin-top: -6px;
    line-height: 28px;
    font-size: 22.2px;
}

.line1 {
    margin-bottom: 28px;
}

.dlg-buttons {
    display: flex;
    justify-content: flex-end;
    gap: 39px;
    margin-top: 44px;
    padding-right: 34px;
}

.btn {
    width: 180px;
    height: 32px;
    line-height: 32px;
    text-align: center;
    background: #fff;
    border-radius: 6px;
    box-shadow: 0 1px 2px rgba(0, 0, 0, 0.4);
}

.btn-ok {
    background: linear-gradient(#e56fa4, #d94f8d);
    color: #fff;
    box-shadow: none;
}

.dlg-details {
    margin: 28px 24px 0 24px;
    height: 332px;
    padding: 1px 6px;
    line-height: 30px;
    background: #fff;
}
```
